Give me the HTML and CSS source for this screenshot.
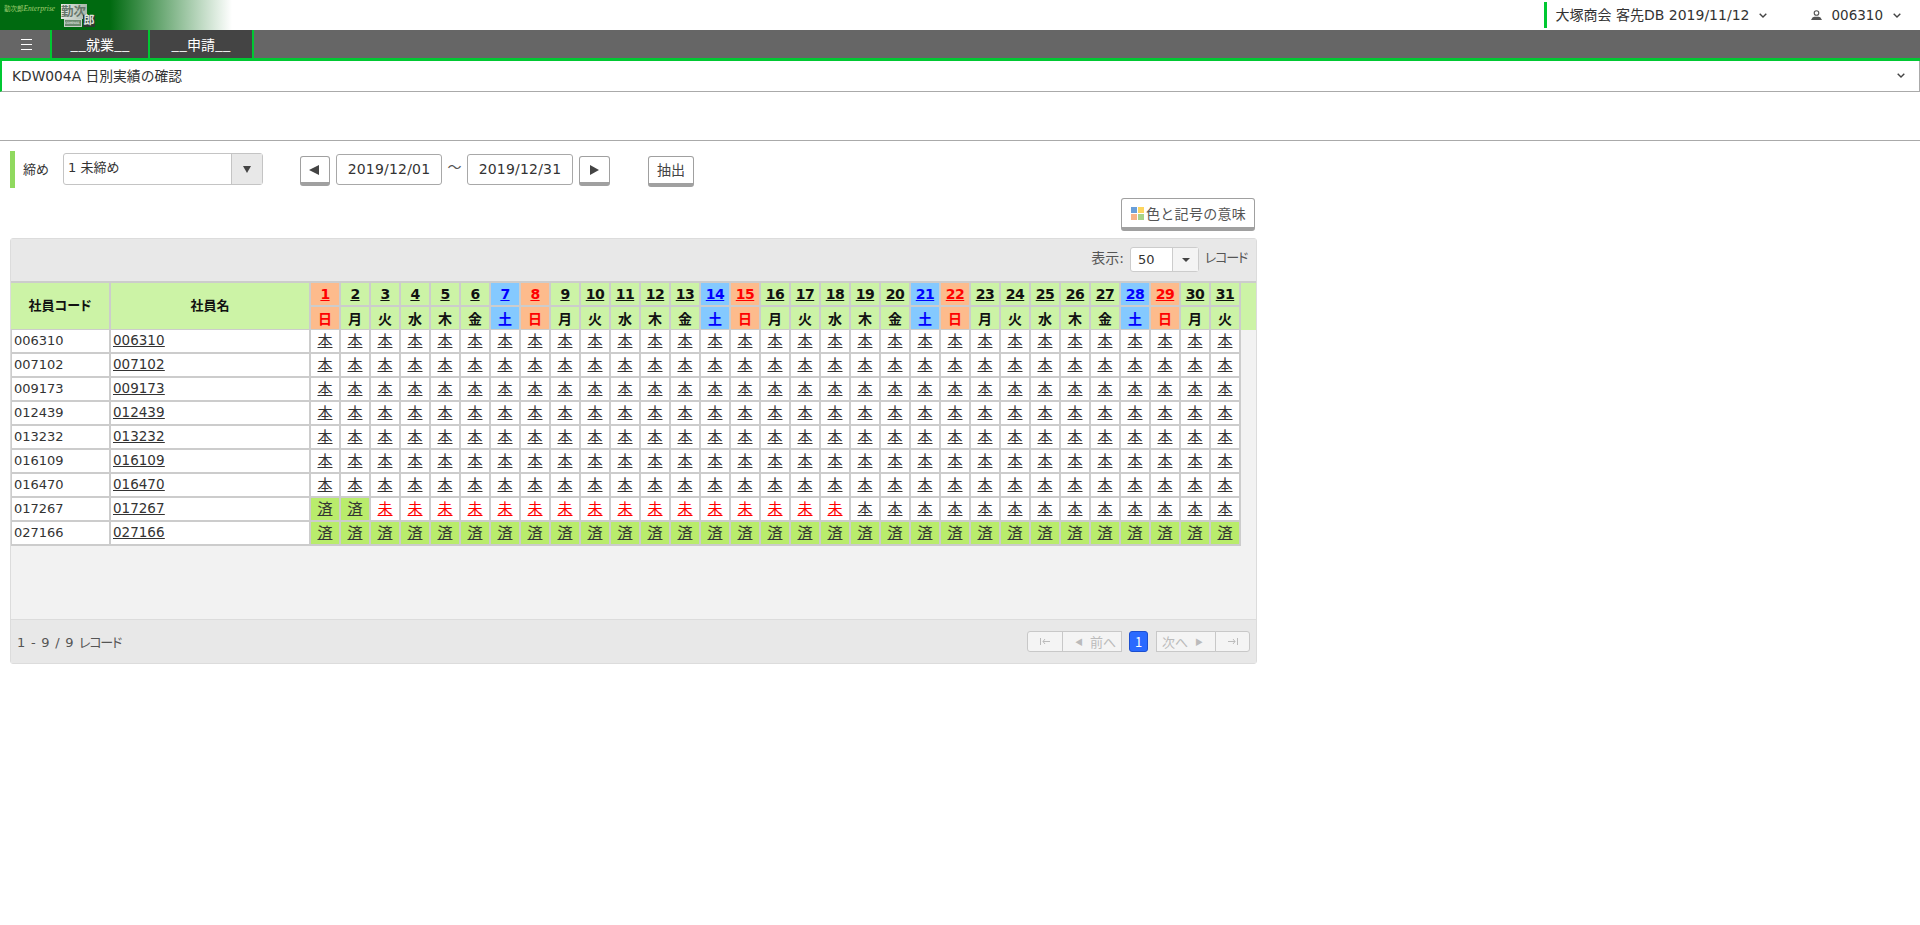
FILE: index.html
```html
<!DOCTYPE html>
<html>
<head>
  <meta charset="UTF-8">
  <title>KDW004A 日別実績の確認</title>
  <link rel="stylesheet" href="styles.css">
</head>
<body>
  <!-- top bar -->
  <div class="topbar">
    <div class="logo">
      <span class="logo-name">勤次郎<i>Enterprise</i></span>
      <span class="logo-mark">
        <b class="logo-top">勤次</b>
        <span class="logo-sub"><em>COMPASS</em><b>郎</b></span>
      </span>
    </div>
    <div class="top-info">
      <div class="company">大塚商会 客先DB 2019/11/12</div>
      <svg class="chev" width="8" height="5" viewBox="0 0 8 5"><path d="M.7.7L4 4 7.300.7" fill="none" stroke="#444" stroke-width="1.4"/></svg>
      <svg class="user" width="11" height="10" viewBox="0 0 11 10"><circle cx="5.500" cy="3" r="2.300" fill="none" stroke="#555" stroke-width="1.100"/><path d="M0 10h11L9.500 7.400C8 6.800 7 6.800 5.500 6.800S3 6.800 1.500 7.400z" fill="#555"/></svg>
      <div class="userid">006310</div>
      <svg class="chev" width="8" height="5" viewBox="0 0 8 5"><path d="M.7.7L4 4 7.300.7" fill="none" stroke="#444" stroke-width="1.4"/></svg>
    </div>
  </div>

  <div class="nav">
    <div class="nav-menu">
      <svg width="11" height="11" viewBox="0 0 11 11"><path d="M0 .5h11M0 5.500h11M0 10.500h11" stroke="#fff"/></svg>
    </div>
    <div class="nav-item nav-work">__就業__</div>
    <div class="nav-item nav-apply">__申請__</div>
  </div>

  <div class="title-bar">
    <span>KDW004A 日別実績の確認</span>
    <svg width="8" height="5" viewBox="0 0 8 5"><path d="M.7.7L4 4 7.300.7" fill="none" stroke="#444" stroke-width="1.4"/></svg>
  </div>

  <div class="spacer"></div>

  <div class="content">
    <div class="filter">
      <label class="filter-label">締め</label>
      <div class="select">
        <span class="select-text">1 未締め</span>
        <span class="select-btn"><svg width="8" height="7" viewBox="0 0 8 7"><path d="M0 0h8L4 7z" fill="#444"/></svg></span>
      </div>
      <button class="arrow-btn arrow-first"><svg width="10" height="10" viewBox="0 0 10 10"><path d="M10 0v10L0 5z" fill="#444"/></svg></button>
      <div class="date">2019/12/01</div>
      <span class="tilde">～</span>
      <div class="date">2019/12/31</div>
      <button class="arrow-btn arrow-last"><svg width="9" height="10" viewBox="0 0 9 10"><path d="M0 0v10l9-5z" fill="#444"/></svg></button>
      <button class="extract-btn">抽出</button>
    </div>

    <div class="legend-row">
      <button class="legend-btn">
        <span class="legend-icon"><i class="c1"></i><i class="c2"></i><i class="c3"></i><i class="c4"></i></span>色と記号の意味
      </button>
    </div>

    <div class="grid-panel">
      <div class="grid-toolbar">
        <span class="size-label">表示:</span>
        <div class="page-size"><span class="page-size-val">50</span><span class="page-size-btn"></span></div>
        <span class="record-label kana">レコード</span>
      </div>
      <div class="grid-body">
        <table class="grid">
          <colgroup id="cols"></colgroup>
          <thead id="head"></thead>
          <tbody id="rows"></tbody>
        </table>
      </div>
      <div class="grid-footer">
        <span class="count">1 - 9 / 9 <span class="kana">レコード</span></span>
        <div class="pager">
          <div class="pg pg-first">
            <svg width="10" height="7" viewBox="0 0 10 7"><path d="M.5 0v7M10 3.500H3M5 1L3 3.500 5 6" fill="none" stroke="#bbb"/></svg>
          </div>
          <div class="pg pg-prev"><span class="pg-tri">◀</span>前へ</div>
          <div class="pg-num">1</div>
          <div class="pg pg-next">次へ<span class="pg-tri">▶</span></div>
          <div class="pg pg-last">
            <svg width="10" height="7" viewBox="0 0 10 7"><path d="M9.500 0v7M0 3.500h7M5 1l2 2.500L5 6" fill="none" stroke="#bbb"/></svg>
          </div>
        </div>
      </div>
    </div>
  </div>

  <script src="table.js"></script>
</body>
</html>
```

FILE: styles.css
```css
* {
  box-sizing: border-box;
}
body {
  margin: 0;
  background-color: #fff;
  color: #333;
  font-family: "DejaVu Sans", "Noto Sans CJK JP", sans-serif;
  font-size: 14px;
}
button {
  font-family: inherit;
  padding: 0;
  cursor: pointer;
}
.kana {
  font-family: "Noto Sans CJK JP", sans-serif;
  font-feature-settings: "palt";
  font-size: 13px;
  letter-spacing: -1.200px;
}

/* top bar */
.topbar {
  display: flex;
  justify-content: space-between;
  height: 30px;
}
.logo {
  display: flex;
  width: 232px;
  padding: 4px 0 0 4px;
  background: linear-gradient(to right, #006a10 0, #006a10 110px, #fff 232px);
}
.logo-name {
  width: 57px;
  font-size: 6.500px;
  line-height: 10px;
  color: #a2cf70;
  white-space: nowrap;
}
.logo-name i {
  font-family: "Liberation Serif", serif;
  font-size: 7.500px;
}
.logo-mark {
  display: flex;
  flex-direction: column;
  width: 36px;
}
.logo-top {
  width: 26px;
  height: 15px;
  background: linear-gradient(to right, #e6ebe6, #a9b6a9);
  color: #66766a;
  font-size: 12.500px;
  line-height: 15px;
  white-space: nowrap;
  overflow: hidden;
}
.logo-sub {
  display: flex;
  align-items: flex-end;
  height: 8px;
  padding-left: 3px;
}
.logo-sub em {
  width: 18px;
  height: 8px;
  background-color: #6d8a70;
  border: 1px solid #c8d0c8;
  color: #fff;
  font-size: 3px;
  font-style: normal;
  line-height: 6px;
  overflow: hidden;
}
.logo-sub b {
  width: 12px;
  height: 12px;
  margin-left: 1px;
  background-color: #2e3a32;
  color: #dfe4df;
  font-size: 11px;
  line-height: 12px;
  text-align: center;
}
.top-info {
  display: flex;
  align-items: center;
}
.company {
  height: 26px;
  padding-left: 8px;
  border-left: 3px solid #00c832;
  line-height: 26px;
}
.top-info .chev {
  margin-left: 10px;
}
.user {
  margin-left: 44px;
}
.userid {
  margin-left: 9px;
  font-size: 13.500px;
}
.top-info .chev:last-child {
  margin-left: 10px;
  margin-right: 19px;
}

/* nav */
.nav {
  display: flex;
  height: 31px;
  padding-left: 2px;
  background-color: #666;
  border-bottom: 3px solid #00c832;
  color: #fff;
}
.nav-menu {
  display: flex;
  justify-content: center;
  align-items: center;
  width: 50px;
  padding-left: 1px;
  border-right: 2px solid #00c832;
}
.nav-item {
  background-color: #444;
  border-right: 2px solid #00c832;
  font-family: "Noto Sans CJK JP", sans-serif;
  font-size: 14px;
  line-height: 28px;
  text-align: center;
}
.nav-work {
  width: 98px;
}
.nav-apply {
  width: 104px;
}

.title-bar {
  display: flex;
  justify-content: space-between;
  align-items: center;
  height: 31px;
  padding: 0 14px 2px 10px;
  border-left: 2px solid #00c832;
  border-right: 1px solid #aaa;
  border-bottom: 1px solid #aaa;
  font-size: 13.800px;
  color: #333;
}
.spacer {
  height: 49px;
  border-bottom: 1px solid #aaa;
}

.content {
  padding: 10px 0 0 10px;
}

/* filter row */
.filter {
  display: flex;
  align-items: flex-start;
  height: 37px;
}
.filter-label {
  height: 37px;
  width: 53px;
  padding: 7px 0 0 8px;
  border-left: 5px solid #90d95f;
  font-size: 13px;
  line-height: 24px;
}
.select {
  display: flex;
  width: 200px;
  height: 32px;
  margin-top: 2px;
  border: 1px solid #c4c4c4;
  border-radius: 3px;
  font-size: 13px;
}
.select-text {
  flex: 1;
  padding-left: 4px;
  line-height: 28px;
}
.select-btn {
  display: flex;
  justify-content: center;
  align-items: center;
  width: 31px;
  background-color: #e8e8e8;
  border-left: 1px solid #c4c4c4;
}
.arrow-btn {
  display: flex;
  justify-content: center;
  align-items: center;
  width: 31px;
  height: 30px;
  margin-top: 5px;
  background-color: #fff;
  border: 1px solid #a0a0a0;
  border-bottom-width: 4px;
  border-radius: 3px;
}
.arrow-first {
  width: 30px;
  margin-left: 37px;
  margin-right: 6px;
  padding-right: 2px;
}
.arrow-last {
  margin-left: 6px;
}
.date {
  width: 106px;
  height: 31px;
  margin-top: 3px;
  border: 1px solid #a8a8a8;
  border-radius: 3px;
  font-size: 14px;
  letter-spacing: 0.200px;
  line-height: 29px;
  text-align: center;
}
.tilde {
  width: 25px;
  margin-top: 5px;
  text-align: center;
  font-size: 14px;
  color: #555;
}
.extract-btn {
  width: 46px;
  height: 31px;
  margin-top: 5px;
  margin-left: 38px;
  background-color: #fff;
  border: 1px solid #a0a0a0;
  border-bottom-width: 4px;
  border-radius: 3px;
  color: #444;
  font-size: 14px;
  line-height: 24px;
}

.legend-row {
  display: flex;
  justify-content: flex-end;
  width: 1245px;
  margin-top: 10px;
}
.legend-btn {
  display: flex;
  align-items: center;
  width: 134px;
  height: 33px;
  padding-left: 9px;
  background-color: #fff;
  border: 1px solid #a0a0a0;
  border-bottom-width: 4px;
  border-radius: 3px;
  color: #555;
  font-size: 14px;
  letter-spacing: 0.300px;
  white-space: nowrap;
}
.legend-icon {
  display: grid;
  grid-template-columns: 6px 6px;
  grid-auto-rows: 6px;
  gap: 1px;
  margin-right: 2px;
}
.legend-icon i {
  display: block;
}
.c1 { background-color: #6a9fd8; }
.c2 { background-color: #fdd55e; }
.c3 { background-color: #f6b48a; }
.c4 { background-color: #a8d48a; }

/* grid */
.grid-panel {
  width: 1247px;
  margin-top: 7px;
  border: 1px solid #dcdcdc;
  border-radius: 3px;
  background-color: #f2f2f2;
}
.grid-toolbar {
  display: flex;
  justify-content: flex-end;
  align-items: flex-start;
  height: 44px;
  padding-top: 8px;
  padding-right: 9px;
  background-color: #e8e8e8;
  border-bottom: 2px solid #ccc;
  color: #555;
}
.size-label {
  font-size: 14px;
  line-height: 22px;
}
.page-size {
  display: flex;
  width: 69px;
  height: 25px;
  margin-left: 6px;
  background-color: #fff;
  border: 1px solid #ccc;
  border-radius: 3px;
  color: #333;
}
.page-size-val {
  width: 41px;
  padding-left: 7px;
  font-size: 13px;
  line-height: 23px;
}
.page-size-btn {
  position: relative;
  flex: 1;
  background-color: #f4f4f4;
  border-left: 1px solid #ccc;
}
.page-size-btn:after {
  content: "";
  position: absolute;
  left: 9px;
  top: 10px;
  border-left: 4px solid transparent;
  border-right: 4px solid transparent;
  border-top: 4px solid #444;
}
.record-label {
  margin-left: 6px;
  line-height: 20px;
}
.grid-body {
  height: 336px;
}
.grid {
  table-layout: fixed;
  width: 1245px;
  border-collapse: separate;
  border-spacing: 0;
}
.grid th,
.grid td {
  padding: 0;
  border-right: 2px solid #ccc;
  border-bottom: 2px solid #ccc;
  text-align: center;
}
.grid th {
  height: 24px;
  background-color: #ccf3a6;
  color: #111;
  font-size: 14px;
  font-weight: bold;
}
.grid thead tr + tr th {
  height: 23px;
  border-bottom-width: 1px;
}
.grid th.head-name {
  padding-bottom: 4px;
  border-bottom-width: 1px;
  font-family: "Noto Sans CJK JP", sans-serif;
  font-size: 13px;
  font-feature-settings: "palt";
}
.grid th.filler {
  border: 0;
}
.grid th.day-num {
  font-size: 14px;
  letter-spacing: -0.500px;
  text-decoration: underline;
}
.grid th.sun {
  background-color: #fdbb8c;
  color: #f00;
}
.grid th.sat {
  background-color: #84c9ff;
  color: #00f;
}
.grid td {
  height: 24px;
  background-color: #fff;
  font-size: 15px;
  line-height: 20px;
  text-decoration: underline;
}
.grid td.code {
  padding-left: 2px;
  border-left: 1px solid #ccc;
  font-size: 13px;
  text-align: left;
  text-decoration: none;
}
.grid td.name {
  padding: 0 0 2px 2px;
  font-size: 13.500px;
  text-align: left;
}
.grid td.name a {
  color: #333;
}
.grid td.done {
  background-color: #b9ec6c;
}
.grid td.todo {
  color: #f00;
}

/* footer */
.grid-footer {
  display: flex;
  justify-content: space-between;
  align-items: center;
  height: 44px;
  padding: 0 6px;
  background-color: #e8e8e8;
  border-top: 1px solid #dcdcdc;
  font-size: 13px;
  color: #555;
}
.count {
  word-spacing: 1.500px;
}
.pager {
  display: flex;
  align-items: center;
  color: #bbb;
  font-family: "Noto Sans CJK JP", sans-serif;
}
.pg {
  display: flex;
  justify-content: center;
  align-items: center;
  height: 21px;
  background-color: #f4f4f4;
  border: 1px solid #c8c8c8;
}
.pg-first {
  width: 36px;
  border-radius: 3px 0 0 3px;
}
.pg-prev {
  width: 60px;
  margin-left: -1px;
}
.pg-next {
  width: 60px;
}
.pg-last {
  width: 35px;
  margin-left: -1px;
  border-radius: 0 3px 3px 0;
}
.pg-tri {
  margin: 0 7px;
  font-size: 8px;
}
.pg-num {
  width: 19px;
  height: 21px;
  margin: 0 8px 0 7px;
  background-color: #2a6aff;
  border: 1px solid #1c4fd0;
  border-radius: 3px;
  color: #fff;
  line-height: 19px;
  text-align: center;
}
```

FILE: table.js
```js
var WEEK = ["日", "月", "火", "水", "木", "金", "土"];
var EMP = ["006310", "007102", "009173", "012439", "013232", "016109", "016470", "017267", "027166"];

function dayClass(day) {
  var wd = (day - 1) % 7;
  if (wd == 0) return "sun";
  if (wd == 6) return "sat";
  return "";
}

function cellFor(code, day) {
  if (code == "027166") return "<td class=\"done\">済</td>";
  if (code == "017267") {
    if (day <= 2) return "<td class=\"done\">済</td>";
    if (day <= 18) return "<td class=\"todo\">未</td>";
  }
  return "<td>本</td>";
}

var cols = "<col style=\"width:100px\"><col style=\"width:200px\">";
var row1 = "<tr><th rowspan=\"2\" class=\"head-name\">社員コード</th><th rowspan=\"2\" class=\"head-name\">社員名</th>";
var row2 = "<tr>";
for (var d = 1; d <= 31; d++) {
  var cls = dayClass(d);
  cols += "<col style=\"width:30px\">";
  row1 += "<th class=\"day-num " + cls + "\">" + d + "</th>";
  row2 += "<th class=\"" + cls + "\">" + WEEK[(d - 1) % 7] + "</th>";
}
cols += "<col>";
row1 += "<th rowspan=\"2\" class=\"filler\"></th></tr>";
row2 += "</tr>";

document.getElementById("cols").innerHTML = cols;
document.getElementById("head").innerHTML = row1 + row2;

var body = "";
EMP.forEach(function(code) {
  body += "<tr><td class=\"code\">" + code + "</td><td class=\"name\"><a href=\"#\">" + code + "</a></td>";
  for (var d = 1; d <= 31; d++) {
    body += cellFor(code, d);
  }
  body += "</tr>";
});
document.getElementById("rows").innerHTML = body;
```
